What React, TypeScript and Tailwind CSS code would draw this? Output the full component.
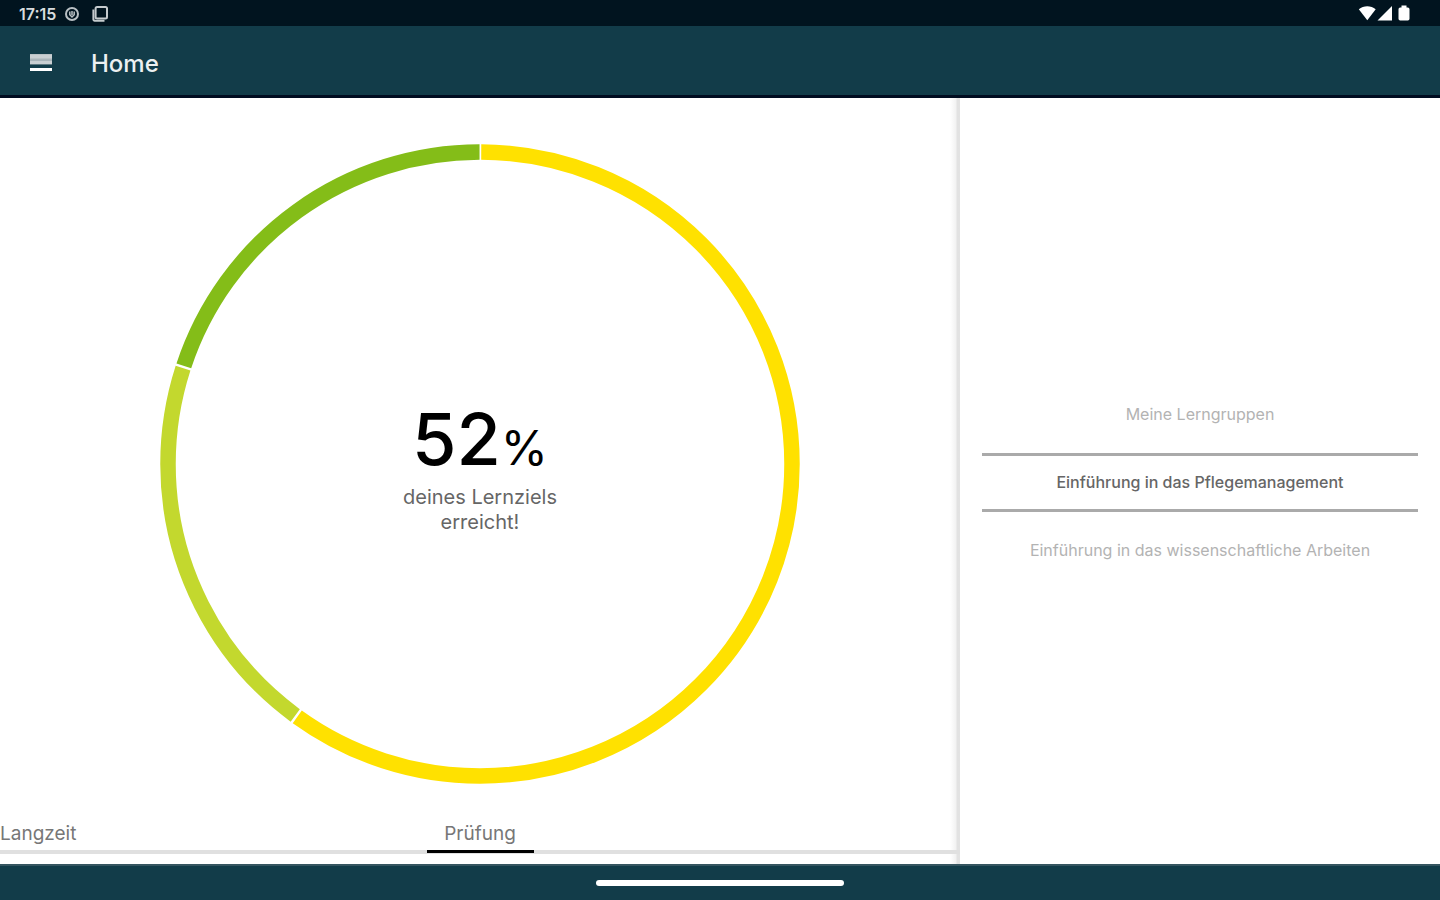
import { useState } from "react";
import clsx from "clsx";

const CIRCUMFERENCE = 2 * Math.PI * 312;

const segments = [
  { color: "#ffe100", start: 0, share: 0.6 },
  { color: "#c3d82e", start: 0.6, share: 0.2 },
  { color: "#84bd18", start: 0.8, share: 0.2 },
];

const groups = [
  "Meine Lerngruppen",
  "Einführung in das Pflegemanagement",
  "Einführung in das wissenschaftliche Arbeiten",
];

function StatusBar() {
  return (
    <div className="flex h-[26px] shrink-0 items-center justify-between bg-[#01141f] pr-[30px] pl-[19px] text-white">
      <div className="flex items-center gap-1 pt-0.5">
        <span className="w-[41px] text-base leading-4 font-semibold text-[#d8dcde]">17:15</span>
        <svg className="h-4 w-4" viewBox="0 0 16 16" fill="none" stroke="#b9c0c4">
          <circle cx="8" cy="8" r="6" strokeWidth="2" />
          <path d="M5.8 5.5v3.2L8 11l2.2-2.3V5.5M8 5v4" strokeWidth="1.5" />
        </svg>
        <svg className="ml-2 h-4 w-4" viewBox="0 0 16 16" fill="none" stroke="#c5cbce" strokeWidth="2">
          <rect x="3.6" y="1" width="11.4" height="11.4" rx="1.5" />
          <path d="M1.4 3.5v10a1.2 1.2 0 0 0 1.2 1.2H12.5" />
        </svg>
      </div>
      <svg className="h-[18px] w-[52px]" viewBox="0 0 52 18" fill="#fff">
        <path d="M.8 5.2C5.5 1.2 13 1.2 17.7 5.2L9.3 16.2Z" />
        <path d="M34 2v14.5H19.5Z" />
        <path d="M43.5 1.5h5v2h1.3q1.7 0 1.7 1.7v9.6q0 1.8-1.7 1.8h-7.6q-1.7 0-1.7-1.8V5.2q0-1.7 1.7-1.7h1.3Z" />
      </svg>
    </div>
  );
}

function ProgressRing() {
  return (
    <div className="grid w-2/3 place-items-center">
      <svg className="col-start-1 row-start-1 w-full" viewBox="0 0 640 640" fill="none">
        <g transform="rotate(-90 320 320)">
          {segments.map((s) => (
            <circle
              key={s.color}
              cx="320"
              cy="320"
              r="312"
              stroke={s.color}
              strokeWidth="15.5"
              strokeDasharray={`${CIRCUMFERENCE * s.share - 2.5} ${CIRCUMFERENCE}`}
              strokeDashoffset={-(CIRCUMFERENCE * s.start + 1.25)}
            />
          ))}
        </g>
      </svg>
      <div className="col-start-1 row-start-1 flex flex-col items-center pt-2.5 text-center">
        <p className="flex items-baseline leading-none text-black">
          <span className="text-[72px] leading-none font-medium">52</span>
          <span className="text-[48px] leading-none">%</span>
        </p>
        <p className="mt-2.5 w-44 text-xl leading-[25px] text-[#666]">deines Lernziels erreicht!</p>
      </div>
    </div>
  );
}

export default function App() {
  const [tab, setTab] = useState<"langzeit" | "pruefung">("pruefung");
  const [selected, setSelected] = useState(1);

  return (
    <div className="flex min-h-screen flex-col bg-white font-['Inter',sans-serif]">
      <StatusBar />
      <header className="flex h-[72px] shrink-0 items-center gap-[39px] border-b-3 border-[#000c20] bg-[#123c49] pt-1.5 pl-[30px]">
        <button aria-label="Menü" className="cursor-pointer">
          <svg className="h-[22px] w-[22px]" viewBox="0 0 22 22">
            <path d="M0 1h22v10.5H0z" fill="#a9b4b9" />
            <path d="M0 1.5h22v4H0zM0 8h22v3H0z" fill="#c9cfd2" />
            <path d="M0 15h22v3H0z" fill="#fff" />
          </svg>
        </button>
        <h1 className="text-2xl font-medium text-[#edf0f1]">Home</h1>
      </header>

      <main className="flex flex-1">
        <section className="flex w-2/3 flex-col items-center bg-linear-to-l from-[#e2e2e2] from-[3px] via-[#f2f2f2] via-[4px] to-white to-[10px] pt-[46px] pb-[10px]">
          <ProgressRing />
          <div className="mt-auto grid w-full grid-cols-[1fr_auto_1fr] border-b-4 border-[#e0e0e0] text-[19px] leading-6 text-[#777]">
            <button
              onClick={() => setTab("langzeit")}
              className={clsx(
                "-mb-[3px] cursor-pointer justify-self-start border-b-3 pb-1",
                tab === "langzeit" ? "border-black" : "border-transparent",
              )}
            >
              Langzeit
            </button>
            <button
              onClick={() => setTab("pruefung")}
              className={clsx(
                "-mb-[3px] w-[107px] cursor-pointer border-b-3 pb-1",
                tab === "pruefung" ? "border-black" : "border-transparent",
              )}
            >
              Prüfung
            </button>
          </div>
        </section>

        <aside className="flex w-1/3 flex-col justify-center px-[22px] pt-0.5">
          {groups.map((group, i) => (
            <button
              key={group}
              onClick={() => setSelected(i)}
              className={clsx(
                "cursor-pointer text-center",
                i === selected
                  ? "h-[59px] border-y-3 border-[#aaa] text-base font-medium text-[#666]"
                  : "h-[77px] text-base text-[#b3b3b3]",
              )}
            >
              {group}
            </button>
          ))}
        </aside>
      </main>

      <footer className="flex h-9 shrink-0 items-center justify-center border-t-2 border-[#355560] bg-[#123c49]">
        <div className="h-1.5 w-[248px] rounded-full bg-white" />
      </footer>
    </div>
  );
}
